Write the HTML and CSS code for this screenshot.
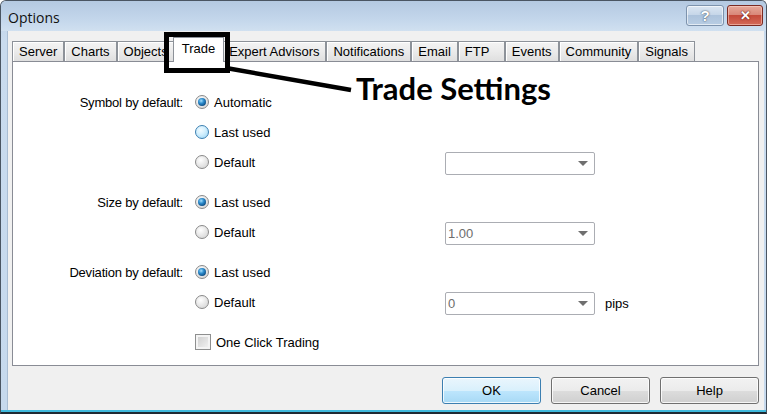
FILE: index.html
```html
<!DOCTYPE html>
<html>
<head>
<meta charset="utf-8">
<title>Options</title>
<link rel="stylesheet" href="styles.css">
</head>
<body>
<div class="window">
  <div class="titlebar">
    <span class="title">Options</span>
    <div class="tb-buttons">
      <div class="tb-btn help">?</div>
      <div class="tb-btn close">&#x2715;</div>
    </div>
  </div>
  <div class="client">
    <div class="tabs">
      <div class="tab">Server</div>
      <div class="tab">Charts</div>
      <div class="tab">Objects</div>
      <div class="tab sel">Trade</div>
      <div class="tab">Expert Advisors</div>
      <div class="tab">Notifications</div>
      <div class="tab">Email</div>
      <div class="tab ftp">FTP</div>
      <div class="tab">Events</div>
      <div class="tab">Community</div>
      <div class="tab">Signals</div>
    </div>
    <div class="panel">
      <div class="group">
        <div class="row">
          <div class="lbl">Symbol by default:</div>
          <div class="opt"><span class="radio on"></span>Automatic</div>
        </div>
        <div class="row">
          <div class="lbl"></div>
          <div class="opt"><span class="radio hover"></span>Last used</div>
        </div>
        <div class="row">
          <div class="lbl"></div>
          <div class="opt"><span class="radio"></span>Default</div>
          <div class="combo"><span class="val"></span><span class="arrow"></span></div>
        </div>
      </div>
      <div class="group">
        <div class="row">
          <div class="lbl">Size by default:</div>
          <div class="opt"><span class="radio on"></span>Last used</div>
        </div>
        <div class="row">
          <div class="lbl"></div>
          <div class="opt"><span class="radio"></span>Default</div>
          <div class="combo"><span class="val">1.00</span><span class="arrow"></span></div>
        </div>
      </div>
      <div class="group">
        <div class="row">
          <div class="lbl">Deviation by default:</div>
          <div class="opt"><span class="radio on"></span>Last used</div>
        </div>
        <div class="row">
          <div class="lbl"></div>
          <div class="opt"><span class="radio"></span>Default</div>
          <div class="combo"><span class="val">0</span><span class="arrow"></span></div>
          <div class="pips">pips</div>
        </div>
      </div>
      <div class="group check-group">
        <div class="row">
          <div class="lbl"></div>
          <div class="opt"><span class="checkbox"></span>One Click Trading</div>
        </div>
      </div>
    </div>
    <div class="footer">
      <div class="btn default">OK</div>
      <div class="btn">Cancel</div>
      <div class="btn">Help</div>
    </div>
  </div>
</div>

<div class="callout-box"></div>
<svg class="callout-line" width="770" height="414" viewBox="0 0 770 414">
  <line x1="226" y1="68" x2="351" y2="90" stroke="#000" stroke-width="4.5"/>
</svg>
<div class="callout-text">Trade Settings</div>
</body>
</html>
```

FILE: styles.css
```css
html, body {
  margin: 0;
  padding: 0;
}
body {
  width: 770px;
  height: 414px;
  overflow: hidden;
  background: #ffffff;
  position: relative;
  font-family: "Liberation Sans", Arial, sans-serif;
  font-size: 13px;
  color: #000;
}

.window {
  box-sizing: border-box;
  width: 767px;
  height: 414px;
  border: 1px solid #4a5562;
  border-bottom-width: 2px;
  border-bottom-color: #1f2a33;
  border-radius: 6px 6px 0 0;
  background: linear-gradient(#bcd0e6, #c9dbee 40px, #c6d9ed);
  padding: 0 2px 2px 7px;
  display: flex;
  flex-direction: column;
  box-shadow: inset 0 -2px 0 #3fb9dc;
}

.titlebar {
  height: 30px;
  flex: none;
  display: flex;
  align-items: center;
  justify-content: space-between;
  margin-left: -7px;
  margin-right: -2px;
  padding-left: 7px;
  background: linear-gradient(#b4c9e1, #c3d6eb 60%, #d0e0f0);
  border-radius: 5px 5px 0 0;
}
.title {
  font-family: "Open Sans", "Liberation Sans", sans-serif;
  font-size: 14px;
  color: #111;
  margin-top: 2px;
}
.tb-buttons {
  display: flex;
  gap: 3px;
  margin-right: 3px;
  align-self: flex-start;
  margin-top: 4px;
}
.tb-btn {
  box-sizing: border-box;
  height: 21px;
  border-radius: 3px;
  display: flex;
  align-items: center;
  justify-content: center;
  font-weight: bold;
  color: #fff;
}
.tb-btn.help {
  width: 38px;
  border: 1px solid #7d93ad;
  background: linear-gradient(#dbe6f2, #c4d5e8 50%, #adc3dc 50%, #b8cde3);
  box-shadow: inset 0 0 0 1px rgba(255,255,255,0.6);
  font-size: 15px;
  text-shadow: 0 0 2px #556677, 0 0 1px #445566;
}
.tb-btn.close {
  width: 36px;
  border: 1px solid #7b2a22;
  background: linear-gradient(#e6a898, #d9887a 45%, #c44a3b 50%, #d46a58);
  box-shadow: inset 0 0 0 1px rgba(255,220,210,0.5);
  font-size: 13px;
  text-shadow: 0 0 2px #6a1d15, 0 0 1px #6a1d15;
}

.client {
  flex: 1;
  background: #f0f0f0;
  padding: 10px 5px 6px 4px;
  display: flex;
  flex-direction: column;
  border-left: 1px solid #a9bdd3;
  margin-left: -1px;
}

.tabs {
  display: flex;
  align-items: flex-end;
  height: 20px;
  position: relative;
  z-index: 1;
}
.tab {
  box-sizing: border-box;
  height: 20px;
  padding: 2px 6px 0 6px;
  border: 1px solid #8d9299;
  border-bottom: none;
  margin-right: 0;
  background: linear-gradient(#f4f4f4, #ebebeb 50%, #dfdfdf);
  box-shadow: inset 1px 1px 0 #fff;
  white-space: nowrap;
  line-height: 16px;
}
.tab.ftp {
  min-width: 47px;
}
.tab.sel {
  height: 25px;
  margin-bottom: -1px;
  margin-left: -2px;
  margin-right: -2px;
  padding: 3px 8px 0 8px;
  background: #fff;
  box-shadow: none;
  position: relative;
  z-index: 2;
}

.panel {
  box-sizing: border-box;
  width: 747px;
  height: 305px;
  border: 1px solid #898c95;
  background: #fff;
  padding-top: 25px;
}
.group {
  margin-bottom: 10px;
}
.check-group {
  margin-top: 1px;
}
.row {
  display: flex;
  align-items: center;
  height: 30px;
}
.lbl {
  width: 170px;
  text-align: right;
  margin-right: 12px;
  white-space: nowrap;
  letter-spacing: -0.2px;
}
.opt {
  width: 250px;
  display: flex;
  align-items: center;
  gap: 5px;
  white-space: nowrap;
}
.radio {
  box-sizing: border-box;
  width: 14px;
  height: 14px;
  border-radius: 50%;
  border: 1px solid #8a8a8a;
  background: radial-gradient(circle at 40% 35%, #ffffff 0%, #eeeeee 35%, #cfcfcf 100%);
  position: relative;
  flex: none;
}
.radio.hover {
  border-color: #3c7fb1;
  background: radial-gradient(circle at 40% 35%, #f2fbff 0%, #d4f0fe 40%, #96d3f5 100%);
}
.radio.on::after {
  content: "";
  position: absolute;
  left: 2px;
  top: 2px;
  width: 8px;
  height: 8px;
  border-radius: 50%;
  background: radial-gradient(circle at 40% 35%, #a9e0fb 0%, #2f8fd0 35%, #0f4f86 75%, #0a2f55 100%);
}
.checkbox {
  box-sizing: border-box;
  width: 16px;
  height: 16px;
  border: 1px solid #8e8f8f;
  background: linear-gradient(135deg, #cbcbcb, #f6f6f6);
  box-shadow: inset 0 0 0 2px #f4f4f4;
  flex: none;
}
.combo {
  box-sizing: border-box;
  width: 150px;
  height: 23px;
  border: 1px solid #abadb3;
  border-radius: 2px;
  background: #fff;
  display: flex;
  align-items: center;
  justify-content: space-between;
  padding: 0 6px 0 2px;
  color: #6d6d6d;
  margin-top: 2px;
}
.arrow {
  width: 0;
  height: 0;
  border-left: 5px solid transparent;
  border-right: 5px solid transparent;
  border-top: 5px solid #6f6f6f;
}
.pips {
  margin-left: 10px;
  margin-top: 3px;
}

.footer {
  display: flex;
  justify-content: flex-end;
  gap: 10px;
  margin-top: 11px;
  width: 747px;
}
.btn {
  box-sizing: border-box;
  width: 99px;
  height: 27px;
  border: 1px solid #707070;
  border-radius: 3px;
  background: linear-gradient(#f2f2f2, #ebebeb 50%, #dddddd 50%, #cfcfcf);
  box-shadow: inset 0 0 0 1px rgba(255,255,255,0.8);
  display: flex;
  align-items: center;
  justify-content: center;
}
.btn.default {
  border-color: #3c7fb1;
  background: linear-gradient(#eaf6fd, #d9f0fc 50%, #bee6fd 50%, #a7d9f5);
}

.callout-box {
  position: absolute;
  left: 164px;
  top: 32px;
  width: 66px;
  height: 41px;
  box-sizing: border-box;
  border: 5px solid #000;
  z-index: 5;
}
.callout-line {
  position: absolute;
  left: 0;
  top: 0;
  z-index: 5;
  pointer-events: none;
}
.callout-text {
  position: absolute;
  left: 356px;
  top: 73px;
  font-family: Lato, "Open Sans", sans-serif;
  font-weight: bold;
  font-size: 31px;
  line-height: 31px;
  color: #000;
  z-index: 5;
  white-space: nowrap;
}
```
